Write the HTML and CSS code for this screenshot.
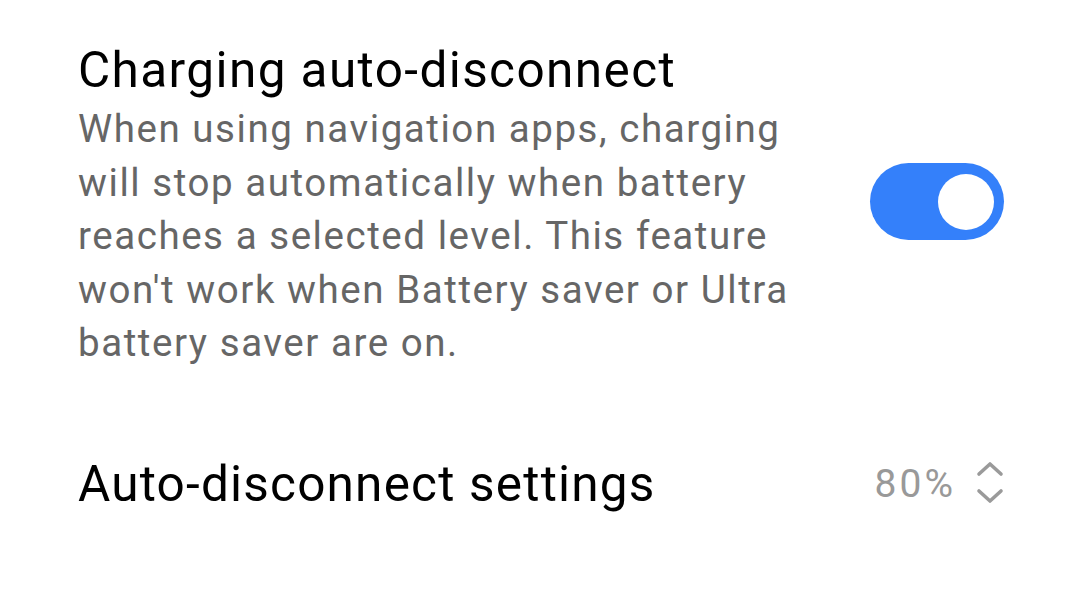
FILE: index.html
```html
<!DOCTYPE html>
<html>
<head>
<meta charset="utf-8">
<link rel="stylesheet" href="styles.css">
</head>
<body>
<div class="screen">
  <div class="row row-toggle">
    <div class="text">
      <div class="title">Charging auto-disconnect</div>
      <div class="desc">When using navigation apps, charging will stop automatically when battery reaches a selected level. This feature won't work when Battery saver or Ultra battery saver are on.</div>
    </div>
    <div class="switch"><div class="knob"></div></div>
  </div>
  <div class="row row-setting">
    <div class="title title-setting">Auto-disconnect settings</div>
    <div class="value">
      <span class="pct">80%</span>
      <svg class="chev" width="28" height="46" viewBox="0 0 28 46">
        <path d="M3 13 L14 3 L25 13" fill="none" stroke="#9a9a9a" stroke-width="3.6" stroke-linecap="round" stroke-linejoin="round"/>
        <path d="M3 30 L14 40 L25 30" fill="none" stroke="#9a9a9a" stroke-width="3.6" stroke-linecap="round" stroke-linejoin="round"/>
      </svg>
    </div>
  </div>
</div>
</body>
</html>
```

FILE: styles.css
```css
html, body {
  margin: 0;
  padding: 0;
  background: #ffffff;
}
.screen {
  width: 1080px;
  height: 596px;
  box-sizing: border-box;
  padding: 38px 76px 0 78px;
  font-family: Roboto, "Noto Sans", sans-serif;
}
.row {
  display: flex;
  align-items: center;
  justify-content: space-between;
}
.text {
  width: 730px;
}
.title {
  font-size: 49.5px;
  line-height: 64px;
  letter-spacing: 1.4px;
  color: #000;
}
.title-setting {
  letter-spacing: 1.2px;
}
.desc {
  font-size: 38.5px;
  line-height: 53.5px;
  letter-spacing: 1.55px;
  color: #666;
}
.switch {
  width: 134px;
  height: 77px;
  border-radius: 39px;
  background: #3480fa;
  display: flex;
  align-items: center;
  justify-content: flex-end;
  padding-right: 10px;
  box-sizing: border-box;
  margin-top: -4px;
}
.knob {
  width: 56px;
  height: 56px;
  border-radius: 50%;
  background: #fff;
}
.row-setting {
  margin-top: 82px;
}
.value {
  display: flex;
  align-items: center;
  gap: 20px;
}
.pct {
  font-size: 39px;
  letter-spacing: 3px;
  color: #999;
}
.chev {
  display: block;
}
```
